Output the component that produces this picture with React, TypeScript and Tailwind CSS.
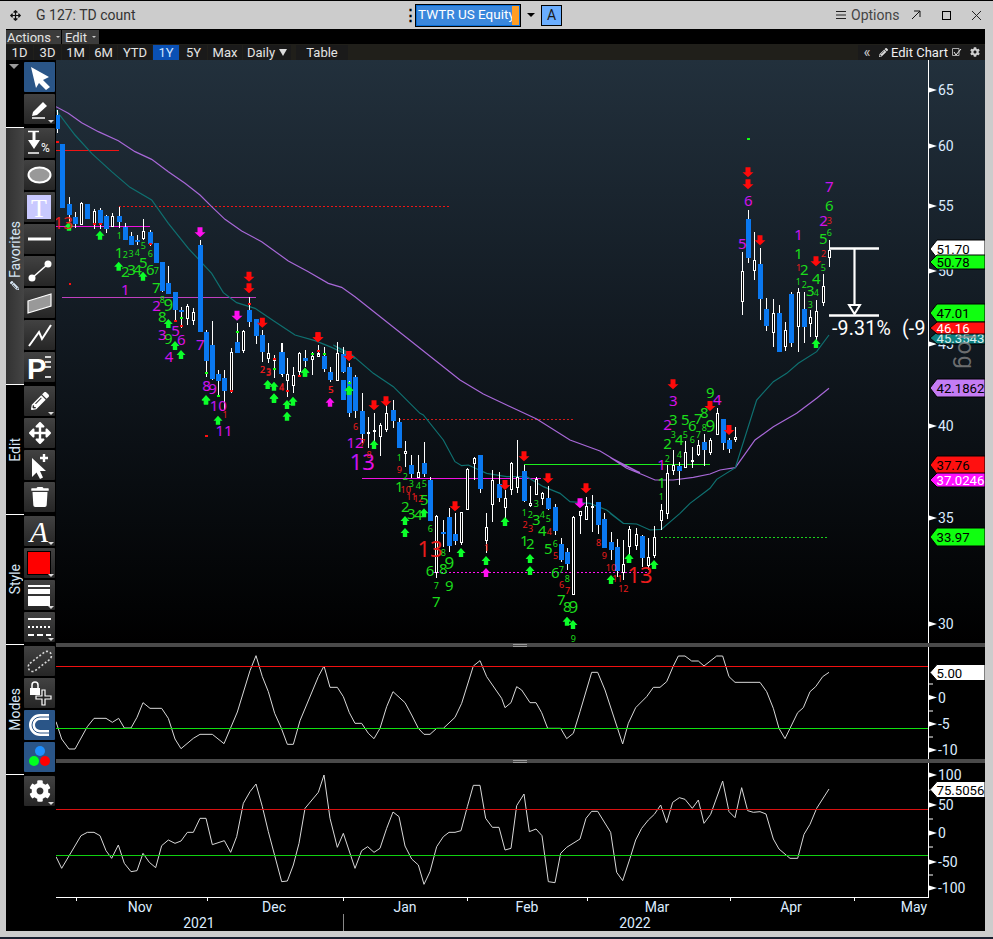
import { FaArrowsAlt, FaCog, FaPencilAlt, FaTrash } from "react-icons/fa";

type Candle = [number, number, number, number, number, "b" | "w"];
type Pt = [number, number];
type Lbl = [number, number, string, "s" | "m" | "l" | "x"];

// chart readings are grouped by the crop they were measured on: [originX, originY, scale 3]
const sets: [number, number, Candle[]][] = [
  [55, 100, [
    [7, 30, 100, 45, 88, "b"], [22, 132, 323, 132, 323, "b"], [43, 292, 375, 312, 345, "b"], [61, 335, 385, 352, 372, "b"],
    [79, 305, 375, 310, 372, "w"], [97, 312, 358, 312, 358, "b"], [118, 327, 388, 333, 370, "w"], [135, 325, 388, 330, 370, "b"],
    [154, 345, 398, 348, 386, "b"], [172, 340, 382, 348, 378, "w"], [193, 320, 385, 348, 366, "b"], [211, 370, 420, 380, 420, "b"],
    [229, 395, 436, 408, 436, "b"], [247, 405, 435, 420, 424, "b"], [265, 357, 420, 393, 416, "w"], [286, 390, 438, 395, 432, "b"],
    [304, 429, 489, 429, 489, "b"], [322, 486, 575, 486, 573, "b"], [340, 497, 582, 549, 582, "b"], [361, 575, 660, 575, 630, "b"],
    [379, 620, 685, 630, 636, "b"], [397, 612, 675, 618, 656, "w"], [415, 625, 675, 637, 660, "w"], [436, 420, 695, 434, 695, "b"],
    [454, 690, 830, 708, 782, "b"], [472, 662, 840, 735, 836, "b"], [490, 810, 885, 822, 842, "b"], [508, 815, 900, 834, 872, "b"],
    [529, 745, 878, 757, 870, "w"], [547, 668, 760, 726, 759, "b"], [565, 690, 760, 695, 752, "w"], [583, 590, 680, 630, 665, "b"],
    [604, 660, 730, 657, 707, "b"], [622, 690, 785, 705, 752, "b"], [640, 730, 785, 760, 776, "w"], [658, 765, 835, 775, 780, "w"],
    [680, 728, 830, 757, 821, "b"], [697, 775, 880, 823, 842, "w"], [715, 800, 880, 826, 856, "w"], [733, 755, 830, 760, 815, "w"],
    [751, 750, 800, 774, 782, "b"], [772, 755, 810, 770, 778, "w"], [790, 735, 770, 760, 770, "w"], [808, 760, 805, 768, 807, "b"],
    [826, 800, 845, 816, 840, "b"], [847, 727, 840, 760, 835, "w"], [865, 740, 815, 762, 815, "b"], [883, 790, 850, 802, 842, "b"],
  ]],
  [340, 380, [
    [10, 0, 60, 0, 60, "b"], [28, 0, 110, 0, 100, "b"],
    [46, 0, 113, 0, 93, "b"], [67, 40, 190, 93, 162, "b"], [85, 110, 205, 156, 160, "w"], [103, 100, 185, 152, 155, "w"],
    [121, 130, 228, 135, 170, "w"], [139, 60, 155, 100, 147, "w"], [160, 60, 145, 90, 123, "b"], [178, 115, 205, 126, 204, "b"],
    [196, 183, 262, 215, 219, "w"], [214, 225, 295, 255, 282, "b"], [235, 225, 295, 277, 291, "w"], [253, 186, 290, 250, 283, "b"],
    [271, 290, 423, 300, 423, "b"], [289, 405, 595, 408, 578, "w"], [310, 420, 500, 456, 462, "b"], [328, 385, 515, 412, 498, "b"],
    [346, 400, 495, 462, 483, "b"], [364, 395, 495, 397, 487, "w"], [382, 265, 390, 268, 388, "w"], [403, 230, 300, 234, 251, "w"],
    [421, 225, 338, 225, 327, "b"], [439, 400, 520, 442, 482, "w"], [457, 270, 425, 300, 373, "w"], [478, 277, 365, 312, 354, "b"],
    [496, 330, 415, 355, 383, "w"], [514, 245, 345, 250, 328, "w"], [532, 180, 340, 292, 323, "w"], [553, 255, 365, 274, 362, "b"],
    [571, 318, 380, 370, 377, "w"], [589, 290, 345, 298, 343, "w"], [607, 335, 375, 340, 355, "w"], [625, 318, 390, 354, 387, "b"],
    [646, 372, 465, 381, 453, "b"], [664, 475, 545, 492, 540, "b"], [682, 505, 570, 516, 552, "b"], [700, 408, 645, 412, 643, "w"],
    [721, 395, 462, 395, 407, "w"], [739, 350, 420, 378, 417, "w"], [757, 345, 455, 378, 382, "w"], [775, 365, 462, 366, 435, "b"],
    [793, 400, 505, 418, 503, "b"], [814, 455, 540, 486, 510, "b"], [832, 478, 590, 502, 573, "b"], [850, 480, 600, 553, 578, "w"],
  ]],
  [200, 330, [
    [18, 0, 135, 6, 93, "b"], [37, 0, 147, 45, 147, "b"], [55, 120, 195, 132, 153, "b"], [73, 120, 240, 144, 183, "b"],
    [94, 55, 190, 67, 182, "w"], [112, 0, 70, 36, 68, "b"], [130, 0, 65, 5, 62, "w"], [169, 0, 42, 0, 17, "b"], [187, 15, 95, 15, 65, "b"],
    [205, 55, 100, 70, 86, "w"], [223, 75, 145, 86, 90, "w"], [244, 40, 135, 66, 132, "b"], [262, 85, 200, 133, 152, "w"],
    [280, 125, 190, 135, 166, "w"], [298, 65, 140, 70, 125, "w"], [316, 60, 110, 84, 93, "b"], [337, 65, 135, 80, 88, "w"],
    [355, 45, 80, 72, 80, "w"], [373, 50, 125, 78, 117, "b"], [391, 110, 155, 126, 150, "b"], [412, 36, 150, 70, 150, "w"],
    [430, 50, 130, 72, 125, "b"], [448, 100, 160, 111, 153, "b"], [466, 135, 245, 141, 243, "b"], [487, 190, 312, 243, 312, "b"],
  ]],
  [600, 370, [
    [70, 510, 630, 583, 608, "w"], [88, 468, 560, 478, 530, "w"], [109, 475, 540, 493, 525, "w"], [127, 495, 590, 498, 564, "b"],
    [145, 505, 600, 562, 585, "w"], [163, 468, 565, 502, 557, "w"], [184, 402, 480, 421, 450, "w"], [202, 285, 447, 310, 430, "w"],
    [220, 240, 315, 285, 302, "w"], [238, 275, 345, 288, 303, "b"], [256, 213, 295, 246, 293, "w"], [277, 232, 295, 270, 272, "w"],
    [295, 210, 258, 226, 254, "w"], [313, 192, 288, 216, 240, "b"], [331, 205, 255, 211, 248, "w"], [352, 115, 195, 129, 193, "w"],
    [370, 147, 240, 147, 218, "b"], [388, 205, 250, 210, 237, "b"], [406, 171, 215, 202, 208, "w"],
  ]],
  [640, 120, [
    [307, 395, 585, 454, 545, "w"], [325, 270, 430, 297, 413, "b"], [343, 335, 480, 420, 452, "w"], [361, 385, 600, 432, 536, "b"],
    [379, 535, 632, 567, 618, "b"], [400, 537, 682, 579, 638, "w"], [418, 555, 695, 579, 695, "b"], [436, 605, 692, 631, 680, "w"],
    [454, 517, 680, 521, 669, "b"], [475, 505, 695, 517, 618, "w"], [493, 515, 668, 567, 620, "b"], [511, 570, 650, 591, 611, "w"],
    [529, 540, 680, 575, 650, "w"], [550, 462, 558, 499, 547, "w"], [568, 360, 440, 390, 412, "w"],
  ]],
];

const candles = sets.flatMap(([ox, oy, rows]) =>
  rows.map((c) => ({
    x: Math.round(ox + c[0] / 3) + 0.5,
    hi: oy + c[1] / 3,
    lo: oy + c[2] / 3,
    top: oy + c[3] / 3,
    bot: oy + c[4] / 3,
    blue: c[5] === "b",
  }))
);

const pts = (ox: number, oy: number, list: Pt[]) => list.map(([x, y]) => `${ox + x / 3},${oy + y / 3}`).join(" ");

const purple = [
  pts(55, 100, [[3, 20], [40, 40], [80, 68], [130, 95], [190, 122], [240, 155], [290, 178], [340, 215], [390, 250], [435, 285], [470, 320], [510, 358], [560, 393], [620, 425], [700, 483], [760, 515], [820, 550], [860, 562], [900, 590]]),
  pts(340, 380, [[360, 0], [430, 42], [500, 75], [590, 117], [690, 180], [780, 213], [850, 255], [900, 278]]),
  pts(600, 370, [[30, 262], [80, 295], [130, 315], [165, 330], [220, 330], [280, 322], [330, 312], [360, 300], [406, 293]]),
  pts(640, 120, [[345, 960], [400, 920], [470, 880], [530, 835], [567, 805]]),
].join(" ");

const teal = [
  pts(55, 100, [[3, 30], [60, 105], [110, 160], [170, 215], [225, 262], [290, 300], [340, 370], [400, 445], [470, 520], [505, 578], [545, 608], [600, 625], [660, 665], [720, 705], [780, 722], [830, 742], [900, 775]]),
  pts(200, 330, [[400, 45], [450, 70], [520, 130], [580, 170], [660, 250]]),
  pts(340, 380, [[250, 105], [310, 180], [345, 245], [365, 257], [385, 255], [440, 280], [500, 290], [560, 290], [610, 320], [660, 340], [690, 365], [750, 370], [800, 390], [850, 430]]),
  pts(600, 370, [[30, 430], [70, 460], [110, 462], [150, 480], [184, 478], [240, 430], [270, 400], [330, 355], [350, 328], [406, 293]]),
  pts(640, 120, [[350, 840], [400, 785], [440, 760], [475, 730], [530, 695], [567, 645]]),
].join(" ");

const osc1 =
  pts(55, 640, [[3, 245], [20, 297], [42, 327], [60, 327], [97, 260], [117, 235], [153, 235], [172, 247], [191, 235], [208, 264], [228, 264], [246, 232], [264, 188], [285, 205], [320, 205], [340, 235], [360, 297], [378, 326], [415, 295], [435, 283], [472, 283], [507, 311], [547, 216], [585, 92], [603, 47], [622, 110], [640, 155], [659, 220], [678, 262], [697, 313], [715, 313], [735, 242], [790, 110], [807, 78], [825, 142], [847, 142], [865, 170], [883, 218], [900, 250], [920, 250], [940, 280], [957, 296], [975, 265], [995, 200], [1014, 155], [1050, 188], [1070, 225], [1090, 265], [1107, 283], [1125, 283], [1145, 265], [1165, 265], [1200, 232], [1220, 190], [1255, 78], [1275, 62], [1295, 110], [1340, 175], [1350, 203], [1368, 188], [1385, 140]]) +
  " " +
  pts(520, 640, [[5, 150], [30, 188], [48, 188], [65, 218], [83, 265], [122, 265], [140, 296], [160, 280], [180, 215], [215, 97], [233, 97], [255, 150], [308, 312], [325, 250], [347, 203], [380, 170], [400, 142], [420, 142], [440, 125], [460, 78], [475, 48], [495, 48], [515, 63], [535, 63], [552, 78], [590, 48], [608, 48], [627, 110], [645, 127], [720, 127], [740, 155], [760, 205], [777, 265], [795, 296], [833, 218], [850, 203], [870, 155], [887, 140], [908, 110], [927, 97]]);

const osc2 =
  pts(55, 640, [[3, 650], [20, 685], [78, 587], [97, 577], [117, 577], [135, 587], [153, 632], [170, 655], [190, 615], [208, 670], [228, 695], [246, 692], [264, 640], [283, 667], [302, 683], [320, 617], [340, 600], [360, 610], [378, 603], [397, 577], [415, 577], [435, 535], [453, 535], [472, 614], [508, 602], [527, 637], [545, 590], [565, 490], [585, 455], [603, 432], [622, 500], [640, 575], [680, 725], [697, 723], [715, 675], [732, 610], [750, 505], [790, 457], [807, 405], [825, 535], [847, 622], [865, 580], [900, 685], [920, 632], [938, 620], [957, 637], [975, 625], [995, 565], [1014, 516], [1032, 530], [1050, 618], [1070, 657], [1090, 675], [1107, 733], [1125, 695], [1145, 620], [1165, 590], [1182, 577], [1200, 577], [1218, 572], [1237, 500], [1255, 436], [1275, 436], [1292, 535], [1312, 562], [1332, 562], [1350, 630], [1368, 625], [1385, 497]]) +
  " " +
  pts(520, 640, [[12, 462], [28, 575], [48, 567], [66, 587], [85, 725], [105, 728], [122, 640], [140, 622], [180, 597], [198, 535], [215, 514], [233, 514], [272, 577], [290, 697], [308, 722], [330, 655], [347, 600], [365, 565], [385, 540], [403, 523], [422, 495], [440, 548], [458, 487], [478, 473], [495, 478], [517, 505], [535, 480], [552, 550], [572, 523], [608, 423], [627, 515], [645, 533], [665, 443], [683, 512], [700, 517], [720, 515], [738, 522], [760, 597], [777, 627], [810, 655], [833, 655], [852, 583], [870, 553], [890, 505], [927, 447]]);

const sizes = { s: 9, m: 15, l: 17, x: 22 };
const GREEN = "#1bdc1b";
const RED = "#ea1c1c";
const MAG = "url(#mg)";

// [origin, colour, labels]
const labelSets: [number, number, string, Lbl[]][] = [
  [55, 100, RED, [[25, 368, "13", "l"], [623, 810, "2", "s"], [641, 815, "3", "s"], [680, 860, "4", "s"], [827, 870, "5", "s"]]],
  [55, 100, GREEN, [[193, 408, "1", "s"], [265, 438, "5", "s"], [286, 460, "6", "s"], [192, 458, "1", "m"], [211, 463, "2", "s"], [228, 462, "3", "s"], [247, 458, "4", "s"], [265, 487, "5", "m"], [286, 508, "6", "m"], [304, 512, "7", "s"], [211, 515, "2", "m"], [230, 510, "3", "m"], [248, 508, "4", "m"], [304, 562, "7", "m"], [322, 600, "8", "s"], [340, 615, "9", "l"], [322, 650, "8", "m"], [340, 717, "9", "m"]]],
  [55, 100, MAG, [[211, 568, "1", "m"], [305, 617, "2", "m"], [322, 703, "3", "m"], [362, 693, "5", "m"], [379, 720, "6", "m"], [342, 770, "4", "m"], [436, 735, "7", "m"], [455, 858, "8", "m"], [473, 867, "9", "m"]]],
  [200, 330, MAG, [[55, 228, "10", "m"], [72, 303, "11", "m"], [465, 337, "12", "m"], [487, 395, "13", "x"]]],
  [200, 330, RED, [[75, 255, "1", "s"], [188, 120, "2", "s"], [206, 127, "3", "s"], [245, 172, "4", "s"], [393, 180, "5", "s"], [467, 290, "6", "s"], [488, 337, "7", "s"], [507, 375, "8", "s"], [598, 420, "9", "s"]]],
  [340, 380, RED, [[197, 330, "10", "s"], [214, 350, "11", "s"], [235, 357, "12", "s"], [270, 508, "13", "x"], [440, 502, "1", "s"], [555, 435, "2", "s"], [572, 445, "3", "s"], [628, 455, "4", "s"], [647, 528, "5", "s"], [665, 613, "6", "s"], [683, 632, "7", "s"], [776, 487, "8", "s"], [793, 528, "9", "s"], [813, 563, "10", "s"], [832, 595, "11", "s"], [850, 625, "12", "s"], [900, 585, "13", "x"]]],
  [340, 380, GREEN, [[178, 232, "1", "s"], [196, 290, "2", "s"], [214, 312, "3", "s"], [235, 317, "4", "s"], [253, 310, "5", "s"], [178, 320, "1", "m"], [253, 358, "5", "m"], [196, 380, "2", "m"], [214, 400, "3", "m"], [235, 403, "4", "m"], [271, 447, "6", "s"], [310, 518, "8", "s"], [328, 550, "9", "l"], [310, 567, "8", "m"], [270, 573, "6", "m"], [289, 618, "7", "s"], [328, 618, "9", "m"], [289, 665, "7", "m"], [553, 397, "1", "s"], [571, 405, "2", "s"], [589, 372, "3", "s"], [607, 405, "4", "s"], [625, 417, "5", "s"], [553, 483, "1", "m"], [571, 492, "2", "m"], [589, 420, "3", "m"], [607, 453, "4", "m"], [625, 505, "5", "m"], [646, 490, "6", "s"], [664, 570, "7", "s"], [682, 595, "8", "s"], [646, 577, "6", "m"], [664, 660, "7", "m"], [682, 680, "8", "m"], [700, 680, "9", "l"], [700, 775, "9", "s"]]],
  [600, 370, MAG, [[185, 283, "1", "m"], [203, 165, "2", "m"], [220, 93, "3", "m"], [352, 88, "4", "m"]]],
  [600, 370, GREEN, [[184, 380, "1", "s"], [202, 265, "2", "s"], [220, 193, "3", "s"], [238, 255, "4", "s"], [256, 193, "5", "s"], [277, 210, "6", "s"], [295, 193, "7", "s"], [313, 172, "8", "s"], [331, 68, "9", "m"], [185, 337, "1", "m"], [203, 220, "2", "m"], [220, 148, "3", "m"], [238, 210, "4", "m"], [256, 148, "5", "m"], [277, 167, "6", "m"], [295, 147, "7", "m"], [313, 127, "8", "m"], [331, 167, "9", "l"]]],
  [640, 120, MAG, [[325, 243, "6", "m"], [307, 370, "5", "m"], [476, 345, "1", "m"], [551, 303, "2", "m"], [568, 201, "7", "m"]]],
  [640, 120, GREEN, [[568, 257, "6", "m"], [550, 357, "5", "m"], [568, 338, "6", "s"], [476, 400, "1", "m"], [493, 450, "2", "m"], [475, 484, "1", "s"], [493, 495, "2", "s"], [511, 512, "3", "m"], [529, 475, "4", "m"], [529, 518, "4", "s"], [511, 555, "3", "s"], [550, 442, "5", "s"]]],
  [640, 120, RED, [[568, 301, "3", "s"], [551, 402, "2", "s"], [476, 444, "1", "s"]]],
];

// [originX, originY, up?, colour, points]
const arrowSets: [number, number, boolean, string, Pt[]][] = [
  [55, 100, false, "#ff0a0a", [[582, 530], [582, 565], [622, 668], [789, 712], [882, 768]]],
  [55, 100, false, "#ff10f0", [[435, 397], [546, 647]]],
  [55, 100, true, "#0cff2a", [[42, 380], [135, 407], [191, 500], [264, 530], [340, 672], [360, 738], [378, 765], [638, 855], [657, 860], [657, 895], [750, 818], [882, 872], [453, 900]]],
  [200, 330, true, "#0cff2a", [[18, 212], [54, 272], [222, 207], [261, 225], [279, 215], [261, 260], [315, 128], [447, 182], [522, 345]]],
  [200, 330, true, "#ff10f0", [[390, 218]]],
  [200, 330, false, "#ff0a0a", [[354, 22], [447, 78], [522, 226], [558, 214]]],
  [340, 380, false, "#ff0a0a", [[345, 379], [495, 315], [552, 229], [624, 295], [738, 325]]],
  [340, 380, false, "#ff10f0", [[720, 370]]],
  [340, 380, true, "#0cff2a", [[27, 32], [195, 423], [195, 459], [252, 400], [363, 519], [495, 426], [438, 543], [570, 537], [570, 573], [681, 725], [699, 735], [813, 600], [867, 537]]],
  [340, 380, true, "#ff10f0", [[438, 579]]],
  [600, 370, true, "#0cff2a", [[87, 566], [162, 585]]],
  [600, 370, false, "#ff0a0a", [[219, 43], [330, 108], [387, 180]]],
  [640, 120, false, "#ff0a0a", [[324, 157], [324, 193], [360, 361], [528, 424]]],
  [640, 120, true, "#0cff2a", [[528, 672]]],
];

const dots: [number, number, string][] = [
  [361, 662, "r"], [379, 653, "g"], [379, 678, "r"], [547, 695, "g"], [583, 612, "r"], [658, 777, "r"], [658, 808, "g"], [454, 820, "g"], [490, 887, "g"], [529, 872, "r"], [697, 872, "r"], [733, 828, "r"], [790, 752, "r"], [772, 762, "g"], [808, 762, "g"], [883, 848, "g"], [286, 433, "r"], [117, 372, "r"], [135, 372, "r"], [7, 127, "r"], [44, 553, "r"],
];

const months: [string, number][] = [["Nov", 140], ["Dec", 274], ["Jan", 405], ["Feb", 527], ["Mar", 657], ["Apr", 791], ["May", 914]];

function Tag({ y, text, fill, color = "#000", h = 8 }: { y: number; text: string; fill: string; color?: string; h?: number }) {
  return (
    <g>
      <polygon points={`930,${y} 937,${y - h} 985,${y - h} 985,${y + h} 937,${y + h}`} fill={fill} stroke="#000" strokeWidth="1" />
      <text x="936.5" y={y + 5} fontSize="13.2" fill={color}>{text}</text>
    </g>
  );
}

function Tick({ y, text, minor }: { y: number; text?: string; minor?: number }) {
  return (
    <g>
      <polygon points={`929,${y - 2.5} 937,${y} 929,${y + 2.5}`} fill="#fff" />
      {text && <text x="938" y={y + 5} fontSize="14" fill="#dcecff">{text}</text>}
      {minor !== undefined && <line x1="929" x2="933" y1={minor} y2={minor} stroke="#fff" />}
    </g>
  );
}

function MainChart() {
  return (
    <svg width="929" height="583" viewBox="56 60 929 583" className="block shrink-0">
      <defs>
        <linearGradient id="bg" x1="0" y1="0" x2="0" y2="1">
          <stop offset="0" stopColor="#22303c" />
          <stop offset="0.45" stopColor="#121a22" />
          <stop offset="1" stopColor="#000" />
        </linearGradient>
        <linearGradient id="mg" x1="0" y1="0" x2="1" y2="1">
          <stop offset="0" stopColor="#a01cff" />
          <stop offset="1" stopColor="#ff08d8" />
        </linearGradient>
        <clipPath id="plot"><rect x="56" y="60" width="872" height="583" /></clipPath>
      </defs>
      <rect x="56" y="60" width="929" height="583" fill="url(#bg)" />
      <g clipPath="url(#plot)">
        <g shapeRendering="crispEdges">
          <line x1="56" x2="119" y1="150.5" y2="150.5" stroke="#f01414" />
          <line x1="119" x2="451" y1="206.5" y2="206.5" stroke="#f01414" strokeDasharray="2 2" />
          <line x1="56" x2="150" y1="226.5" y2="226.5" stroke="#f010e0" />
          <line x1="62" x2="256" y1="297.5" y2="297.5" stroke="#c040c0" />
          <line x1="399" x2="573" y1="419.5" y2="419.5" stroke="#d01818" strokeDasharray="2 2" />
          <line x1="524" x2="710" y1="464.5" y2="464.5" stroke="#1cf01c" />
          <line x1="362" x2="541" y1="478.5" y2="478.5" stroke="#f010e0" />
          <line x1="433" x2="650" y1="572.5" y2="572.5" stroke="#ff10f0" strokeDasharray="2 2" />
          <line x1="661" x2="828" y1="537.5" y2="537.5" stroke="#1cd01c" strokeDasharray="2 2" />
        </g>
        <polyline points={purple} fill="none" stroke="#a868d8" strokeWidth="1.2" />
        <polyline points={teal} fill="none" stroke="#0f7070" strokeWidth="1.2" />
        <g shapeRendering="crispEdges">
          {candles.map((c, i) => (
            <g key={i}>
              <line x1={c.x} x2={c.x} y1={c.hi} y2={c.lo} stroke="#fff" />
              {c.blue ? (
                <rect x={c.x - 2.5} y={c.top} width="5" height={Math.max(c.bot - c.top, 2)} fill="#0a78f0" />
              ) : (
                <rect x={c.x - 1} y={c.top} width="2" height={Math.max(c.bot - c.top, 1)} fill="#000" stroke="#fff" />
              )}
            </g>
          ))}
          {dots.map(([x, y, k], i) => (
            <rect key={i} x={55 + x / 3 - 1} y={100 + y / 3 - 1} width="2.5" height="2" fill={k === "r" ? "#ff1010" : "#10ff10"} />
          ))}
          <rect x="747" y="138" width="3" height="2" fill="#10ff10" />
          <rect x="205" y="435" width="3" height="2" fill="#ff1010" />
        </g>
        {arrowSets.flatMap(([ox, oy, up, color, list], s) =>
          list.map(([zx, zy], i) => {
            const x = ox + zx / 3;
            const y = oy + zy / 3;
            const d = up
              ? `M${x},${y - 5} L${x + 4.5},${y} L${x + 2.2},${y} L${x + 2.2},${y + 4} L${x - 2.2},${y + 4} L${x - 2.2},${y} L${x - 4.5},${y} Z`
              : `M${x},${y + 5} L${x + 5.5},${y} L${x + 2.5},${y} L${x + 2.5},${y - 5} L${x - 2.5},${y - 5} L${x - 2.5},${y} L${x - 5.5},${y} Z`;
            return <path key={`${s}-${i}`} d={d} fill={color} />;
          })
        )}
        <g textAnchor="middle" style={{ fontFamily: "'Noto Sans', sans-serif" }}>
          {labelSets.flatMap(([ox, oy, color, list], s) =>
            list.map(([zx, zy, t, size], i) => (
              <text key={`${s}-${i}`} x={ox + zx / 3} y={oy + zy / 3 + sizes[size] * 0.36} fontSize={sizes[size]} fill={color}>{t}</text>
            ))
          )}
        </g>
        <g stroke="#fff" fill="none">
          <line x1="829" x2="879" y1="248.5" y2="248.5" strokeWidth="2.5" />
          <line x1="829" x2="879" y1="315.5" y2="315.5" strokeWidth="2.5" />
          <line x1="854.5" x2="854.5" y1="248" y2="305" strokeWidth="2.2" />
          <polygon points="849,305 860,305 854.5,314" strokeWidth="2" />
        </g>
        <text x="832" y="335" fontSize="19.5" fill="#fff" wordSpacing="6" letterSpacing="0.2">-9.31% (-9</text>
      </g>
      <line x1="928.5" x2="928.5" y1="60" y2="643" stroke="#fff" />
      <Tick y={90} text="65" /><Tick y={146} text="60" /><Tick y={206} text="55" /><Tick y={271} text="50" />
      <Tick y={344} text="45" /><Tick y={426} text="40" /><Tick y={518} text="35" /><Tick y={624} text="30" />
      <Tag y={249} text="51.70" fill="#fff" h={9} />
      <Tag y={262} text="50.78" fill="#10ff10" h={7} />
      <Tag y={338} text="45.3543" fill="#0f8080" color="#d8f0f0" h={6} />
      <Tag y={313} text="47.01" fill="#10ff10" h={9} />
      <Tag y={328} text="46.16" fill="#ff1010" color="#fff" h={6} />
      <Tag y={388} text="42.1862" fill="#c47cf4" h={9} />
      <Tag y={465} text="37.76" fill="#ff1010" h={9} />
      <Tag y={480} text="37.0246" fill="#ff10ff" color="#fff" h={7} />
      <Tag y={537} text="33.97" fill="#10ff10" h={9} />
      <text transform="translate(958 334) rotate(90)" fontSize="24" letterSpacing="1" fill="#8a8a8a" fillOpacity="0.75">log</text>
    </svg>
  );
}

function Divider() {
  return (
    <div className="h-[4px] w-full shrink-0 bg-[#4a4a4a] flex justify-center">
      <div className="w-[14px] h-[4px] flex flex-col justify-center gap-[1px] ml-[-1px]">
        <div className="h-px bg-[#9a9a9a]" />
        <div className="h-px bg-[#9a9a9a]" />
      </div>
    </div>
  );
}

function OscOne() {
  return (
    <svg width="929" height="112" viewBox="56 647 929 112" className="block shrink-0">
      <rect x="56" y="647" width="929" height="112" fill="#000" />
      <polyline points={osc1} fill="none" stroke="#d8d8d8" strokeWidth="1" />
      <g shapeRendering="crispEdges">
        <line x1="56" x2="928" y1="666.5" y2="666.5" stroke="#f01010" />
        <line x1="56" x2="928" y1="728.5" y2="728.5" stroke="#10e010" />
      </g>
      <line x1="928.5" x2="928.5" y1="647" y2="759" stroke="#fff" />
      <Tick y={697.5} text="0" minor={684} /><Tick y={724} text="-5" minor={711} /><Tick y={750} text="-10" minor={737} />
      <Tag y={672.5} text="5.00" fill="#fff" />
    </svg>
  );
}

function OscTwo() {
  return (
    <svg width="929" height="168" viewBox="56 763 929 168" className="block shrink-0">
      <rect x="56" y="763" width="929" height="168" fill="#000" />
      <polyline points={osc2} fill="none" stroke="#d8d8d8" strokeWidth="1" />
      <g shapeRendering="crispEdges">
        <line x1="56" x2="928" y1="809.5" y2="809.5" stroke="#d81010" />
        <line x1="56" x2="928" y1="855.5" y2="855.5" stroke="#10d010" />
        <line x1="56" x2="929" y1="897.5" y2="897.5" stroke="#fff" />
        {[76, 207, 343, 467, 587, 730, 854].map((x) => (
          <line key={x} x1={x + 0.5} x2={x + 0.5} y1="897" y2="901" stroke="#fff" />
        ))}
        <line x1="343.5" x2="343.5" y1="914" y2="931" stroke="#888" />
      </g>
      <line x1="928.5" x2="928.5" y1="763" y2="898" stroke="#fff" />
      <Tick y={775} text="100" minor={790} /><Tick y={805} text="50" minor={819} /><Tick y={833} text="0" minor={847} />
      <Tick y={862} text="-50" minor={875} /><Tick y={888} text="-100" />
      <Tag y={789.5} text="75.5056" fill="#fff" />
      <g fontSize="14" fill="#dcecff" textAnchor="middle">
        {months.map(([m, x]) => <text key={m} x={x} y="912">{m}</text>)}
        <text x="199" y="928">2021</text>
        <text x="635" y="928">2022</text>
      </g>
    </svg>
  );
}

function Btn({ children, blue, corner }: { children: React.ReactNode; blue?: boolean; corner?: boolean }) {
  return (
    <div className={`relative w-[31px] h-[30px] shrink-0 flex items-center justify-center rounded-[1px] ${blue ? "bg-[#2a5587]" : "bg-gradient-to-b from-[#424242] to-[#262626]"}`}>
      {children}
      {corner && <div className="absolute right-[1px] bottom-[1px] w-0 h-0 border-x-[3px] border-x-transparent border-t-[3px] border-t-[#d8d8d8]" />}
    </div>
  );
}

function Ico({ children }: { children: React.ReactNode }) {
  return <svg width="31" height="30" viewBox="0 0 31 30" className="block">{children}</svg>;
}

const railLabel = "[writing-mode:vertical-rl] rotate-180 text-[14px] text-[#d5e4f2] leading-none whitespace-nowrap";

function Rail() {
  return (
    <div className="w-[50px] shrink-0 flex flex-col bg-black">
      <div className="h-[67px] flex">
        <div className="w-[18px] pt-[4px] pl-[2px]">
          <div className="w-0 h-0 border-x-[5px] border-x-transparent border-t-[5px] border-t-[#9a9a9a] ml-[1px]" />
        </div>
        <div className="flex flex-col gap-[2px] pt-[2px]">
          <Btn blue><Ico><path d="M7 5 L25 15 L19 18 L26 25 L22 28 L15 21 L12 26 Z" fill="#fff" /></Ico></Btn>
          <Btn corner><Ico><path d="M9 18 L19 8 L23 12 L13 21 L8 22 Z" fill="#fff" /><line x1="8" x2="21" y1="24" y2="24" stroke="#fff" strokeWidth="1.5" /></Ico></Btn>
        </div>
      </div>

      <div className="h-[257px] flex">
        <div className="w-[18px] h-full bg-gradient-to-r from-[#323232] to-[#454545] border-t border-t-white flex items-center justify-center">
          <div className={`${railLabel} flex items-center gap-[3px]`}>
            <span className="rotate-90 block"><FaPencilAlt size={9} color="#d5e4f2" /></span>Favorites
          </div>
        </div>
        <div className="flex flex-col gap-[2px] pt-[1px]">
          <Btn><Ico>
            <line x1="4" x2="15" y1="3.5" y2="3.5" stroke="#fff" strokeWidth="1.5" />
            <line x1="10" x2="10" y1="3" y2="13" stroke="#fff" strokeWidth="3" />
            <polygon points="4,12 16,12 10,21" fill="#fff" />
            <line x1="4" x2="15" y1="25" y2="25" stroke="#fff" strokeWidth="1.5" />
            <text x="17" y="24" fontSize="12" fill="#fff">%</text>
          </Ico></Btn>
          <Btn><Ico><ellipse cx="15.5" cy="15" rx="11" ry="7.5" fill="#999" stroke="#fff" strokeWidth="2" /></Ico></Btn>
          <Btn><Ico>
            <rect x="3" y="3" width="24" height="24" fill="#c9c9ff" />
            <text x="15" y="25" fontSize="26" fill="#fff" textAnchor="middle" style={{ fontFamily: "'Liberation Serif', serif" }}>T</text>
          </Ico></Btn>
          <Btn><Ico><line x1="4" x2="27" y1="15" y2="15" stroke="#fff" strokeWidth="3" /></Ico></Btn>
          <Btn><Ico><line x1="8" x2="24" y1="22" y2="8" stroke="#fff" strokeWidth="1.6" /><circle cx="8" cy="22" r="3.5" fill="#fff" /><circle cx="24" cy="8" r="3.5" fill="#fff" /></Ico></Btn>
          <Btn><Ico><polygon points="4,13 27,6 27,18 4,25" fill="#999" stroke="#fff" strokeWidth="1.2" /></Ico></Btn>
          <Btn><Ico><polyline points="5,26 15,12 18,19 27,5" fill="none" stroke="#fff" strokeWidth="2" /></Ico></Btn>
          <Btn><Ico>
            <text x="3" y="27" fontSize="29" fontWeight="700" fill="#fff" style={{ fontFamily: "'Liberation Sans', sans-serif" }}>P</text>
            <g stroke="#fff" strokeWidth="1.6"><line x1="21" x2="27" y1="5" y2="5" /><line x1="21" x2="27" y1="10" y2="10" /><line x1="21" x2="27" y1="15" y2="15" /><line x1="21" x2="27" y1="25" y2="25" /></g>
          </Ico></Btn>
        </div>
      </div>

      <div className="h-[130px] flex">
        <div className="w-[18px] border-t border-t-white flex items-center justify-center"><div className={railLabel}>Edit</div></div>
        <div className="flex flex-col gap-[2px] pt-[2px]">
          <Btn corner><FaPencilAlt size={18} color="#fff" /></Btn>
          <Btn><FaArrowsAlt size={22} color="#fff" /></Btn>
          <Btn><Ico>
            <path d="M8 8 L8 27 L12.5 22.5 L16 29 L19 27.5 L16 21 L22 21 Z" fill="#fff" />
            <path d="M20 4 V12 M16 8 H24" stroke="#fff" strokeWidth="2.4" />
          </Ico></Btn>
          <Btn><FaTrash size={20} color="#fff" /></Btn>
        </div>
      </div>

      <div className="h-[130px] flex">
        <div className="w-[18px] border-t border-t-white flex items-center justify-center"><div className={railLabel}>Style</div></div>
        <div className="flex flex-col gap-[2px] pt-[2px]">
          <Btn corner><Ico><text x="15" y="26" fontSize="30" fill="#fff" textAnchor="middle" fontStyle="italic" style={{ fontFamily: "'Liberation Serif', serif" }}>A</text></Ico></Btn>
          <Btn corner><Ico><rect x="3.5" y="3.5" width="23" height="23" fill="#ff0000" stroke="#000" /></Ico></Btn>
          <Btn corner><Ico><rect x="4" y="5" width="22" height="2" fill="#fff" /><rect x="4" y="9" width="22" height="5" fill="#fff" /><rect x="4" y="16" width="22" height="10" fill="#fff" /></Ico></Btn>
          <Btn corner><Ico>
            <g stroke="#fff" strokeWidth="2"><line x1="4" x2="27" y1="7" y2="7" /><line x1="4" x2="27" y1="15" y2="15" strokeDasharray="2 2" /><line x1="4" x2="27" y1="23" y2="23" strokeDasharray="6 3" /></g>
          </Ico></Btn>
        </div>
      </div>

      <div className="h-[130px] flex">
        <div className="w-[18px] border-t border-t-white flex items-center justify-center"><div className={railLabel}>Modes</div></div>
        <div className="flex flex-col gap-[2px] pt-[2px]">
          <Btn><Ico><rect x="2" y="11" width="27" height="9" rx="4.5" transform="rotate(-38 15.5 15)" fill="none" stroke="#d8d8d8" strokeWidth="1.6" strokeDasharray="2 2" /></Ico></Btn>
          <Btn><Ico>
            <path d="M8 10 V7 a3 3 0 0 1 6 0 V10" fill="none" stroke="#fff" strokeWidth="1.5" />
            <rect x="6" y="10" width="10" height="7" fill="#fff" />
            <path d="M18 12 H21 V18 H27 V21 H21 V27 H18 V21 H12 V18 H18 Z" fill="#222" stroke="#fff" strokeWidth="1.2" />
          </Ico></Btn>
          <Btn blue><Ico>
            <path d="M25 7 H16 A8 8 0 0 0 16 23 H25" fill="none" stroke="#fff" strokeWidth="6" />
            <path d="M25 7 H16 A8 8 0 0 0 16 23 H25" fill="none" stroke="#2a5587" strokeWidth="1" />
          </Ico></Btn>
          <Btn blue><Ico><circle cx="16" cy="9" r="5" fill="#1e90ff" /><circle cx="10" cy="19" r="5" fill="#00ff20" /><circle cx="21" cy="19" r="5" fill="#ff0000" /></Ico></Btn>
        </div>
      </div>

      <div className="flex-1 flex">
        <div className="w-[18px] border-t border-t-white" />
        <div className="pt-[2px]"><Btn corner><FaCog size={22} color="#fff" /></Btn></div>
      </div>
    </div>
  );
}

function RangeBtn({ label, w, active }: { label: string; w: string; active?: boolean }) {
  return (
    <div className={`${w} h-[15px] flex items-center justify-center text-[13px] leading-none ${active ? "bg-[#0a50b4] text-[#cfe4ff]" : "bg-[#1a1a1a] text-[#e4e4e4]"}`}>
      {label}
    </div>
  );
}

export default function App() {
  return (
    <div className="w-[993px] h-[939px] bg-[#cccccc] flex flex-col overflow-hidden border-t border-t-black border-b-2 border-b-[#1a2030] [font-family:Roboto,sans-serif]">
      {/* title bar */}
      <div className="h-[28px] shrink-0 flex items-center text-[#333] text-[14px]">
        <div className="w-[36px] flex justify-center"><FaArrowsAlt size={11} color="#111" className="ml-[-6px]" /></div>
        <span className="w-[100px] whitespace-nowrap">G 127: TD count</span>
        <div className="ml-[267px] w-[13px] text-center text-black text-[15px] font-bold">⋮</div>
        <div className="w-[104px] h-[21px] bg-[#ff9d24] border border-[#0a6fd8] outline outline-1 outline-black flex items-center">
          <span className="bg-[#3a87dc] text-white h-full w-[95px] overflow-hidden px-[1px] flex items-center text-[13.5px] leading-none whitespace-nowrap">TWTR US Equity</span>
        </div>
        <div className="ml-[7px] w-0 h-0 border-x-[4px] border-x-transparent border-t-[4px] border-t-black" />
        <div className="ml-[6px] w-[21px] h-[21px] bg-[#6aaeff] border border-black flex items-center justify-center text-[#1a1a1a] text-[14px]">A</div>
        <div className="ml-auto flex items-center pr-[12px]">
          <svg width="10" height="8" viewBox="0 0 10 8" className="block"><path d="M0 .5H10M0 4H10M0 7.5H10" stroke="#222" /></svg>
          <span className="ml-[5px] w-[46px] text-[14px] text-[#444]">Options</span>
          <svg width="10" height="10" viewBox="0 0 10 10" className="ml-[14px] block"><path d="M1 9L9 1M3 1H9V7" fill="none" stroke="#111" strokeWidth="1" /></svg>
          <div className="ml-[21px] w-[9px] h-[9px] border border-black" />
          <svg width="9" height="9" viewBox="0 0 9 9" className="ml-[21px] block"><path d="M0 0L9 9M9 0L0 9" stroke="#222" /></svg>
        </div>
      </div>

      <div className="h-[902px] shrink-0 ml-[6px] w-[979px] flex flex-col bg-black">
        {/* actions */}
        <div className="h-[15px] shrink-0 flex gap-px items-start bg-black pt-px">
          <div className="w-[55px] h-[14px] bg-[#3c3c3c] text-[#e4e4e4] text-[13px] leading-none flex items-center justify-center gap-[5px]">
            Actions<span className="w-0 h-0 border-x-[2px] border-x-transparent border-t-[2px] border-t-[#ccc]" />
          </div>
          <div className="w-[37px] h-[14px] bg-[#3c3c3c] text-[#e4e4e4] text-[13px] leading-none flex items-center justify-center gap-[5px]">
            Edit<span className="w-0 h-0 border-x-[2px] border-x-transparent border-t-[2px] border-t-[#ccc]" />
          </div>
        </div>

        {/* ranges */}
        <div className="h-[16px] shrink-0 bg-[#201f1a] flex items-center gap-[1px]">
          <RangeBtn label="1D" w="w-[27px]" />
          <RangeBtn label="3D" w="w-[27px]" />
          <RangeBtn label="1M" w="w-[27px]" />
          <RangeBtn label="6M" w="w-[27px]" />
          <RangeBtn label="YTD" w="w-[34px]" />
          <RangeBtn label="1Y" w="w-[26px]" active />
          <RangeBtn label="5Y" w="w-[27px]" />
          <RangeBtn label="Max" w="w-[34px]" />
          <div className="w-[48px] h-[15px] bg-[#1a1a1a] text-[#e4e4e4] text-[13px] leading-none flex items-center justify-center gap-[4px]">
            Daily<span className="w-0 h-0 border-x-[4px] border-x-transparent border-t-[7px] border-t-[#ddd]" />
          </div>
          <div className="w-[3px]" />
          <RangeBtn label="Table" w="w-[52px]" />
          <div className="ml-auto flex items-center h-[15px] pr-[5px] bg-[#1a1a1a] text-[#f0f0f0] text-[13px] leading-none">
            <span className="w-[18px] text-center text-[15px] leading-none text-[#ccc]">«</span>
            <span className="ml-[3px] mr-[3px]"><FaPencilAlt size={9} color="#ddd" /></span>
            <span className="w-[56px] whitespace-nowrap">Edit Chart</span>
            <svg width="10" height="10" viewBox="0 0 10 10" className="ml-[5px] block"><path d="M.5 1.5H7V8.5H.5Z" fill="none" stroke="#aaa" /><path d="M2 5L4 8L9 2" fill="none" stroke="#eee" /></svg>
            <span className="ml-[8px]"><FaCog size={10} color="#cfcfcf" /></span>
          </div>
        </div>

        <div className="flex-1 min-h-0 flex">
          <Rail />
          <div className="flex flex-col w-[929px]">
            <MainChart />
            <Divider />
            <OscOne />
            <Divider />
            <OscTwo />
          </div>
        </div>
      </div>
    </div>
  );
}
